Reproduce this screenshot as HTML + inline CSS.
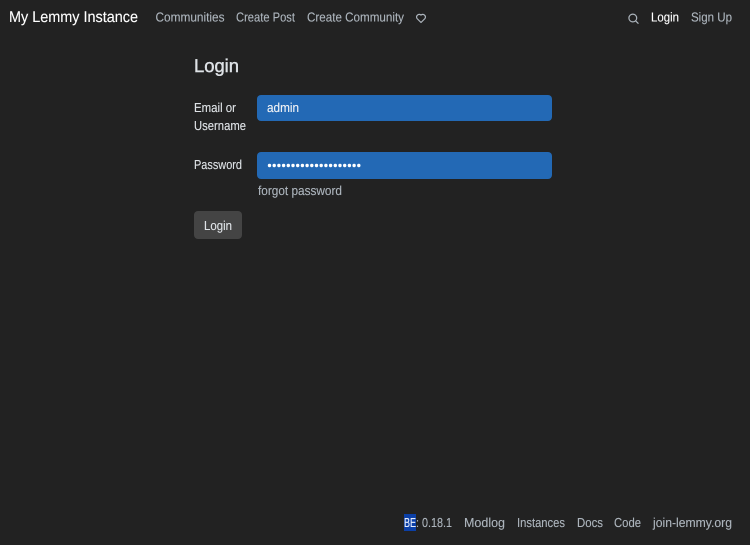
<!DOCTYPE html>
<html lang="en">
<head>
<meta charset="utf-8">
<title>Login - My Lemmy Instance</title>
<style>
html,body{margin:0;padding:0;width:750px;height:545px;overflow:hidden;background:#222222}
svg{display:block;position:absolute;left:0;top:0}
text{font-family:"Liberation Sans",sans-serif;font-size:13px;fill:#adb5bd;white-space:pre;text-rendering:geometricPrecision;stroke:#adb5bd;stroke-width:.12px}
.w{fill:#dee2e6;stroke:#dee2e6}
.b{fill:#fff;stroke:#fff}
</style>
</head>
<body>
<svg width="750" height="545" viewBox="0 0 750 545" xmlns="http://www.w3.org/2000/svg">
<rect width="750" height="545" fill="#222222"/>
<!-- navbar -->
<text class="b" x="9" y="22" textLength="129" lengthAdjust="spacingAndGlyphs" style="font-size:15.500px">My Lemmy Instance</text>
<text x="155.500" y="21.500" textLength="69" lengthAdjust="spacingAndGlyphs">Communities</text>
<text x="236" y="21.500" textLength="59" lengthAdjust="spacingAndGlyphs">Create Post</text>
<text x="307" y="21.500" textLength="97" lengthAdjust="spacingAndGlyphs">Create Community</text>
<path d="M421 22.500l-4-4a2.700 2.700 0 0 1 3.700-3.700l.3.300.3-.3a2.700 2.700 0 0 1 3.700 3.700z" fill="none" stroke="#adb5bd" stroke-width="1.200" stroke-linejoin="round"/>
<circle cx="632.800" cy="18" r="3.900" fill="none" stroke="#adb5bd" stroke-width="1.200"/>
<path d="M635.700 20.900l2.400 2.400" stroke="#adb5bd" stroke-width="1.200" stroke-linecap="round"/>
<text class="b" x="651" y="21.500" textLength="28" lengthAdjust="spacingAndGlyphs">Login</text>
<text x="691" y="21.500" textLength="41" lengthAdjust="spacingAndGlyphs">Sign Up</text>
<!-- form -->
<text class="w" x="194" y="72" textLength="45" lengthAdjust="spacingAndGlyphs" style="font-size:18.500px;stroke-width:.4px">Login</text>
<text class="w" x="194" y="112" textLength="42" lengthAdjust="spacingAndGlyphs">Email or</text>
<text class="w" x="194" y="130" textLength="52" lengthAdjust="spacingAndGlyphs">Username</text>
<rect x="257" y="95" width="295" height="26" rx="4" fill="#2369b5"/>
<text class="w" x="267" y="112" textLength="32" lengthAdjust="spacingAndGlyphs" style="fill:#f0f2f5;stroke:#f0f2f5">admin</text>
<text class="w" x="194" y="169" textLength="48" lengthAdjust="spacingAndGlyphs">Password</text>
<rect x="257" y="152" width="295" height="27" rx="4" fill="#2369b5"/>
<g fill="#ffffff">
<circle cx="269.500" cy="165.500" r="1.700"/><circle cx="274.200" cy="165.500" r="1.700"/><circle cx="278.900" cy="165.500" r="1.700"/><circle cx="283.600" cy="165.500" r="1.700"/><circle cx="288.300" cy="165.500" r="1.700"/><circle cx="293" cy="165.500" r="1.700"/><circle cx="297.700" cy="165.500" r="1.700"/><circle cx="302.400" cy="165.500" r="1.700"/><circle cx="307.100" cy="165.500" r="1.700"/><circle cx="311.800" cy="165.500" r="1.700"/><circle cx="316.500" cy="165.500" r="1.700"/><circle cx="321.200" cy="165.500" r="1.700"/><circle cx="325.900" cy="165.500" r="1.700"/><circle cx="330.600" cy="165.500" r="1.700"/><circle cx="335.300" cy="165.500" r="1.700"/><circle cx="340" cy="165.500" r="1.700"/><circle cx="344.700" cy="165.500" r="1.700"/><circle cx="349.400" cy="165.500" r="1.700"/><circle cx="354.100" cy="165.500" r="1.700"/><circle cx="358.800" cy="165.500" r="1.700"/>
</g>
<text x="258" y="195" textLength="84" lengthAdjust="spacingAndGlyphs">forgot password</text>
<rect x="194" y="211" width="48" height="28" rx="4" fill="#444444"/>
<text class="w" x="204" y="230" textLength="28" lengthAdjust="spacingAndGlyphs">Login</text>
<!-- footer -->
<rect x="404" y="514" width="12" height="17" fill="#0b3fa6"/>
<text class="b" x="404" y="527" textLength="12" lengthAdjust="spacingAndGlyphs" style="fill:#e8eefc;stroke:#e8eefc">BE</text>
<text x="416" y="527" textLength="36" lengthAdjust="spacingAndGlyphs">: 0.18.1</text>
<text x="464" y="527" textLength="41" lengthAdjust="spacingAndGlyphs">Modlog</text>
<text x="517" y="527" textLength="48" lengthAdjust="spacingAndGlyphs">Instances</text>
<text x="577" y="527" textLength="26" lengthAdjust="spacingAndGlyphs">Docs</text>
<text x="614" y="527" textLength="27" lengthAdjust="spacingAndGlyphs">Code</text>
<text x="653" y="527" textLength="79" lengthAdjust="spacingAndGlyphs">join-lemmy.org</text>
</svg>
</body>
</html>
